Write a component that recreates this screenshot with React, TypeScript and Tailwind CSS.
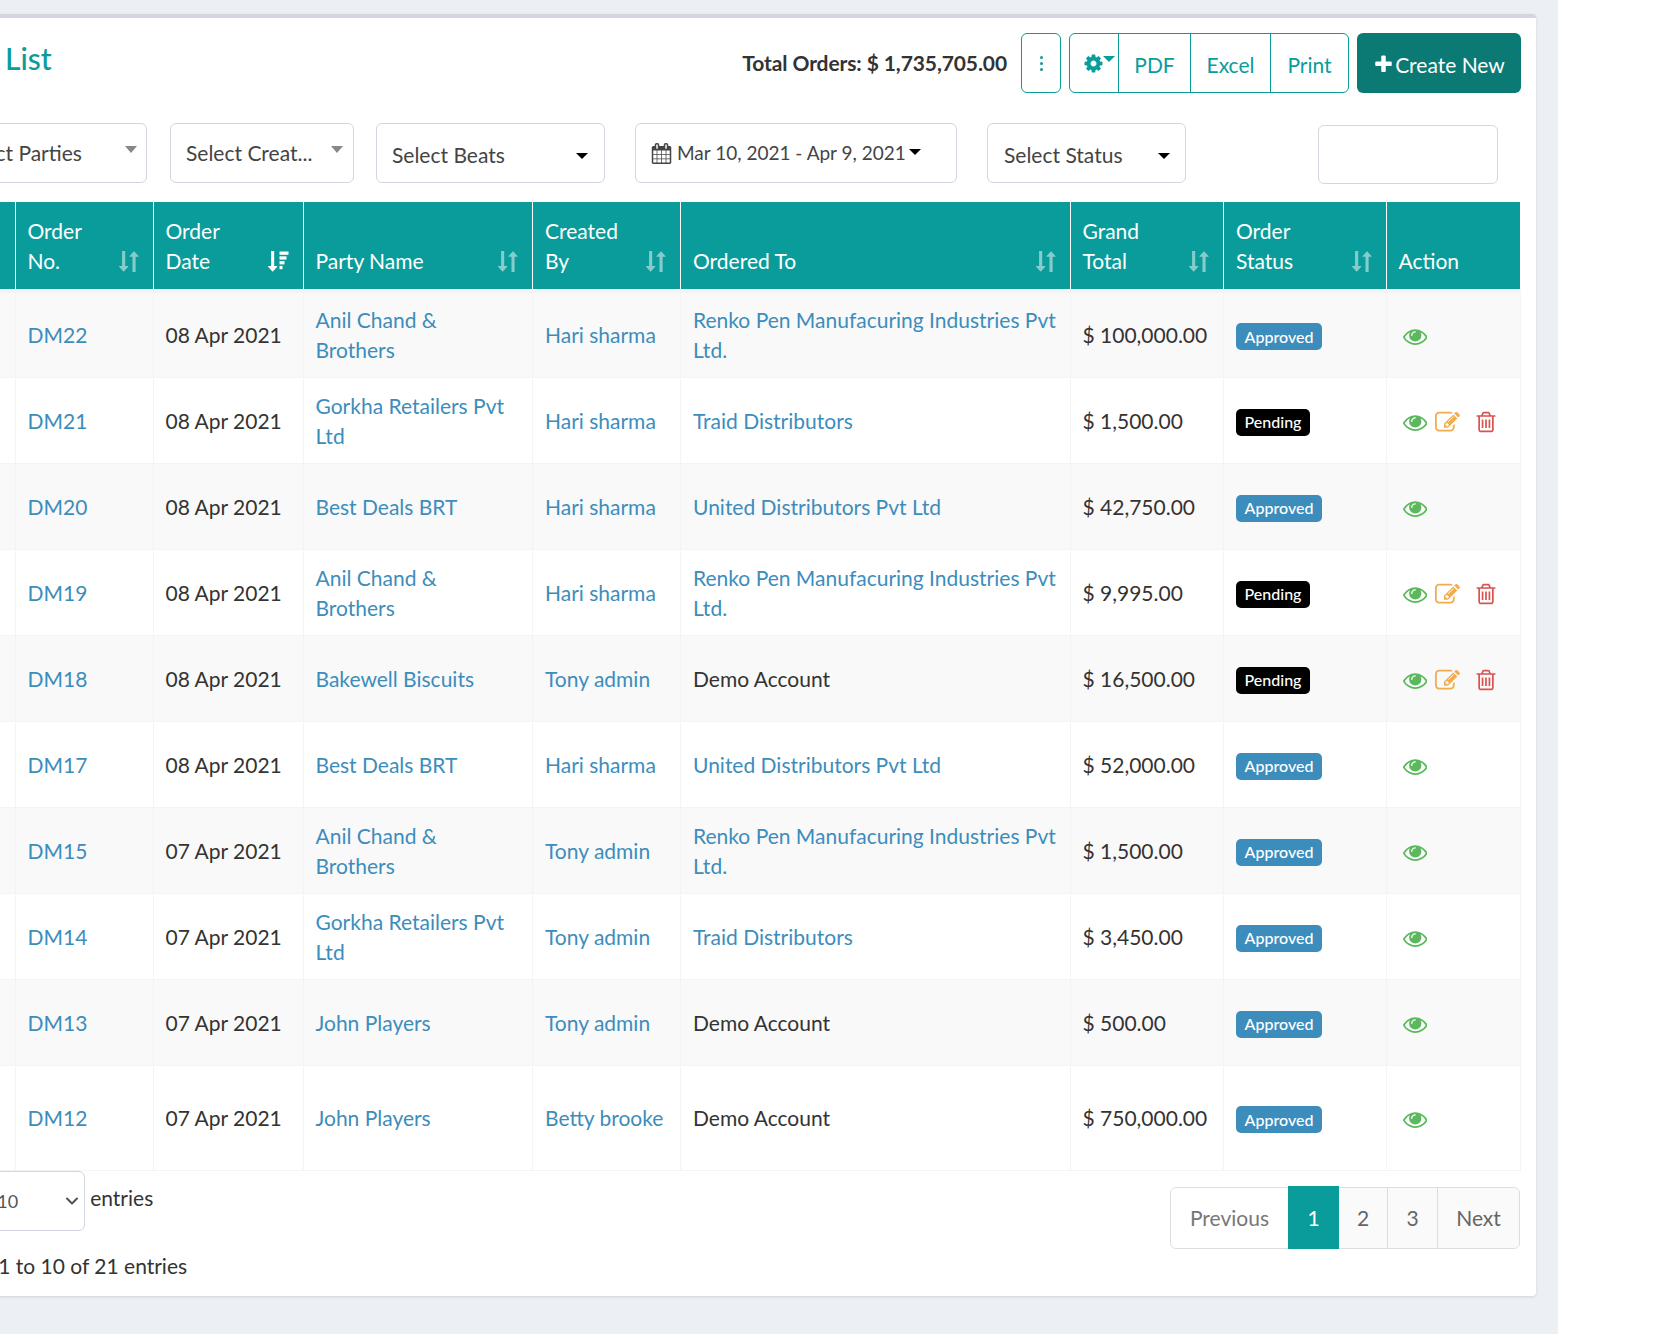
import React from "react";
import { ChevronDown } from "lucide-react";

const rows = [
  { no: "DM22", date: "08 Apr 2021", party: "Anil Chand & Brothers", by: "Hari sharma", to: "Renko Pen Manufacuring Industries Pvt Ltd.", link: true, total: "$ 100,000.00", status: "Approved" },
  { no: "DM21", date: "08 Apr 2021", party: "Gorkha Retailers Pvt Ltd", by: "Hari sharma", to: "Traid Distributors", link: true, total: "$ 1,500.00", status: "Pending" },
  { no: "DM20", date: "08 Apr 2021", party: "Best Deals BRT", by: "Hari sharma", to: "United Distributors Pvt Ltd", link: true, total: "$ 42,750.00", status: "Approved" },
  { no: "DM19", date: "08 Apr 2021", party: "Anil Chand & Brothers", by: "Hari sharma", to: "Renko Pen Manufacuring Industries Pvt Ltd.", link: true, total: "$ 9,995.00", status: "Pending" },
  { no: "DM18", date: "08 Apr 2021", party: "Bakewell Biscuits", by: "Tony admin", to: "Demo Account", link: false, total: "$ 16,500.00", status: "Pending" },
  { no: "DM17", date: "08 Apr 2021", party: "Best Deals BRT", by: "Hari sharma", to: "United Distributors Pvt Ltd", link: true, total: "$ 52,000.00", status: "Approved" },
  { no: "DM15", date: "07 Apr 2021", party: "Anil Chand & Brothers", by: "Tony admin", to: "Renko Pen Manufacuring Industries Pvt Ltd.", link: true, total: "$ 1,500.00", status: "Approved" },
  { no: "DM14", date: "07 Apr 2021", party: "Gorkha Retailers Pvt Ltd", by: "Tony admin", to: "Traid Distributors", link: true, total: "$ 3,450.00", status: "Approved" },
  { no: "DM13", date: "07 Apr 2021", party: "John Players", by: "Tony admin", to: "Demo Account", link: false, total: "$ 500.00", status: "Approved" },
  { no: "DM12", date: "07 Apr 2021", party: "John Players", by: "Betty brooke", to: "Demo Account", link: false, total: "$ 750,000.00", status: "Approved" },
];

const Eye = () => (
  <svg viewBox="0 0 1792 1792" className="w-[24.5px] h-[24.5px] fill-[#5cb85c]">
    <path d="M1664 960q-152-236-381-353 61 104 61 225 0 185-131.5 316.5t-316.5 131.5-316.5-131.5-131.5-316.5q0-121 61-225-229 117-381 353 133 205 333.5 326.5t434.5 121.5 434.5-121.5 333.5-326.5zm-720-384q0-20-14-34t-34-14q-125 0-214.5 89.5t-89.5 214.5q0 20 14 34t34 14 34-14 14-34q0-86 61-147t147-61q20 0 34-14t14-34zm848 384q0 34-20 69-140 230-376.5 368.5t-499.5 138.5-499.5-139-376.5-368q-20-35-20-69t20-69q140-229 376.5-368t499.5-139 499.5 139 376.5 368q20 35 20 69z" />
  </svg>
);

const Edit = () => (
  <svg viewBox="0 0 1792 1792" className="w-[25px] h-[25px] fill-[#f0ad4e]">
    <path d="M888 1184l116-116-152-152-116 116v56h96v96h56zm440-720q-16-16-33 1l-350 350q-17 17-1 33t33-1l350-350q17-17 1-33zm80 594v190q0 119-84.5 203.5t-203.5 84.5h-832q-119 0-203.5-84.5t-84.5-203.5v-832q0-119 84.5-203.5t203.5-84.5h832q63 0 117 25 15 7 18 23 3 17-9 29l-49 49q-14 14-32 8-23-6-45-6h-832q-66 0-113 47t-47 113v832q0 66 47 113t113 47h832q66 0 113-47t47-113v-126q0-13 9-22l64-64q15-15 35-7t20 29zm-96-738l288 288-672 672h-288v-288zm444 132l-92 92-288-288 92-92q28-28 68-28t68 28l152 152q28 28 28 68t-28 68z" />
  </svg>
);

const Trash = () => (
  <svg viewBox="0 0 1792 1792" className="w-[24px] h-[24px] fill-[#d9534f]">
    <path d="M704 736v576q0 14-9 23t-23 9h-64q-14 0-23-9t-9-23v-576q0-14 9-23t23-9h64q14 0 23 9t9 23zm256 0v576q0 14-9 23t-23 9h-64q-14 0-23-9t-9-23v-576q0-14 9-23t23-9h64q14 0 23 9t9 23zm256 0v576q0 14-9 23t-23 9h-64q-14 0-23-9t-9-23v-576q0-14 9-23t23-9h64q14 0 23 9t9 23zm128 724v-948h-896v948q0 22 7 40.500t14.500 27 10.500 8.500h832q3 0 10.500-8.500t14.500-27 7-40.500zm-672-1076h448l-48-117q-7-9-17-11h-317q-10 2-17 11zm928 32v64q0 14-9 23t-23 9h-96v948q0 83-47 143.500t-113 60.500h-832q-66 0-113-58.500t-47-141.500v-952h-96q-14 0-23-9t-9-23v-64q0-14 9-23t23-9h309l70-167q15-37 54-63t79-26h320q40 0 79 26t54 63l70 167h309q14 0 23 9t9 23z" />
  </svg>
);

const Calendar = () => (
  <svg viewBox="0 0 1792 1792" className="w-[21px] h-[21px] fill-[#444]">
    <path d="M192 1664h288v-288h-288v288zm352 0h320v-288h-320v288zm-352-352h288v-320h-288v320zm352 0h320v-320h-320v320zm-352-384h288v-288h-288v288zm736 736h320v-288h-320v288zm-384-736h320v-288h-320v288zm768 736h288v-288h-288v288zm-384-352h320v-320h-320v320zm-352-864v-288q0-13-9.500-22.500t-22.500-9.500h-64q-13 0-22.500 9.500t-9.500 22.500v288q0 13 9.500 22.500t22.500 9.500h64q13 0 22.500-9.500t9.500-22.500zm736 864h288v-320h-288v320zm-384-384h320v-288h-320v288zm384 0h288v-288h-288v288zm32-480v-288q0-13-9.500-22.500t-22.500-9.500h-64q-13 0-22.500 9.500t-9.500 22.500v288q0 13 9.500 22.500t22.500 9.500h64q13 0 22.500-9.500t9.500-22.500zm384-64v1280q0 52-38 90t-90 38h-1408q-52 0-90-38t-38-90v-1280q0-52 38-90t90-38h128v-96q0-66 47-113t113-47h64q66 0 113 47t47 113v96h384v-96q0-66 47-113t113-47h64q66 0 113 47t47 113v96h128q52 0 90 38t38 90z" />
  </svg>
);

const Cog = () => (
  <svg viewBox="0 0 1792 1792" className="w-[21px] h-[21px] fill-[#0a9c9b] shrink-0">
    <path d="M1152 896q0-106-75-181t-181-75-181 75-75 181 75 181 181 75 181-75 75-181zm512-109v222q0 12-8 23t-20 13l-185 28q-19 54-39 91 35 50 107 138 10 12 10 25t-9 23q-27 37-99 108t-94 71q-12 0-26-9l-138-108q-44 23-91 38-16 136-29 186-7 28-36 28h-222q-14 0-24.500-8.500t-11.500-21.500l-28-184q-49-16-90-37l-141 107q-10 9-25 9-14 0-25-11-126-114-165-168-7-10-7-23 0-12 8-23 15-21 51-66.500t54-70.500q-27-50-41-99l-183-27q-13-2-21-12.500t-8-23.500v-222q0-12 8-23t19-13l186-28q14-46 39-92-40-57-107-138-10-12-10-24 0-10 9-23 26-36 98.500-107.500t94.500-71.500q13 0 26 10l138 107q44-23 91-38 16-136 29-186 7-28 36-28h222q14 0 24.500 8.500t11.500 21.500l28 184q49 16 90 37l142-107q9-9 24-9 13 0 25 10 129 119 165 170 7 8 7 22 0 12-8 23-15 21-51 66.500t-54 70.500q26 50 41 98l183 28q13 2 21 12.500t8 23.500z" />
  </svg>
);

const Plus = () => (
  <svg viewBox="0 0 1792 1792" className="w-[21px] h-[21px] mr-[1px] fill-white shrink-0">
    <path d="M1600 736v192q0 40-28 68t-68 28h-416v416q0 40-28 68t-68 28h-192q-40 0-68-28t-28-68v-416h-416q-40 0-68-28t-28-68v-192q0-40 28-68t68-28h416v-416q0-40 28-68t68-28h192q40 0 68 28t28 68v416h416q40 0 68 28t28 68z" />
  </svg>
);

// datatables sort arrows, faded white
const SortBoth = () => (
  <svg viewBox="0 0 21 21" className="absolute right-[14px] bottom-[17px] w-[21px] h-[21px] fill-white opacity-50">
    <g transform="translate(-5.2 -0.4) scale(0.0121)">
      <path d="M1277 1299q8 19-5 35l-350 384q-10 10-23 10-14 0-24-10l-355-384q-13-16-5-35 9-19 29-19h224v-1248q0-14 9-23t23-9h192q14 0 23 9t9 23v1248h224q21 0 29 19z" />
    </g>
    <g transform="translate(5.200 -0.4) scale(0.0121)">
      <path d="M1277 493q-9 19-29 19h-224v1248q0 14-9 23t-23 9h-192q-14 0-23-9t-9-23v-1248h-224q-21 0-29-19t5-35l350-384q10-10 23-10 14 0 24 10l355 384q13 16 5 35z" />
    </g>
  </svg>
);

const SortDesc = () => (
  <svg viewBox="0 0 21 21" className="absolute right-[14px] bottom-[17px] w-[21px] h-[21px] fill-white">
    <g transform="translate(-6.200 -0.4) scale(0.0121)">
      <path d="M1277 1299q8 19-5 35l-350 384q-10 10-23 10-14 0-24-10l-355-384q-13-16-5-35 9-19 29-19h224v-1248q0-14 9-23t23-9h192q14 0 23 9t9 23v1248h224q21 0 29 19z" />
    </g>
    <rect x="11.500" y="0.500" width="9" height="3.300" />
    <rect x="11.500" y="5.300" width="7" height="3.300" />
    <rect x="11.500" y="10.100" width="5" height="3.300" />
    <rect x="11.500" y="14.900" width="3" height="3.300" />
  </svg>
);

const Caret = ({ gray }: { gray?: boolean }) => (
  <span
    className={
      gray
        ? "w-0 h-0 border-x-[6px] border-x-transparent border-t-[7px] border-t-[#888]"
        : "w-0 h-0 border-x-[6px] border-x-transparent border-t-[6.5px] border-t-black"
    }
  />
);

const headers = [
  { label: "", w: "w-[94.500px]" },
  { label: "Order No.", w: "w-[138px]", sort: "both", wrap: "pr-[50px]" },
  { label: "Order Date", w: "w-[150px]", sort: "desc", wrap: "pr-[60px]" },
  { label: "Party Name", w: "w-[229.500px]", sort: "both" },
  { label: "Created By", w: "w-[148px]", sort: "both", wrap: "pr-[40px]" },
  { label: "Ordered To", w: "w-[389.500px]", sort: "both" },
  { label: "Grand Total", w: "w-[153.500px]", sort: "both", wrap: "pr-[50px]" },
  { label: "Order Status", w: "w-[162.500px]", sort: "both", wrap: "pr-[60px]" },
  { label: "Action", w: "w-[134px]" },
];

const cell = "border border-[#f4f4f4] px-[12px] py-0 align-middle";
const linkCls = "text-[#3c8dbc]";

export default function App() {
  return (
    <div className="h-[1334px] w-[1656px] bg-white overflow-hidden font-['Lato',sans-serif] text-[21px] leading-[30px] text-[#333]">
      <div className="w-[1558px] h-[1334px] bg-[#ecf0f5] pt-[14px] overflow-hidden">
        <div className="-ml-[100px] w-[1636px] h-[1282px] bg-white border-t-[4px] border-[#d2d6de] rounded-[4px] shadow-[0_1px_3px_rgba(0,0,0,0.12)] pl-[20px] pr-[16px] pt-[15px]">
          {/* title and export buttons */}
          <div className="flex items-start h-[60px]">
            <h3 className="text-[30px] leading-[30px] mt-[10px] font-medium text-[#0a9c9b]">Order List</h3>
            <div className="ml-auto -mr-[1px] flex items-center">
              <span className="font-bold text-[#333] tracking-[-0.1px] mr-[14px]">Total Orders: $ 1,735,705.00</span>
              <button className="w-[40px] h-[60px] border-[1.5px] border-[#0a9c9b] rounded-[6px] text-[#0a9c9b] flex flex-col items-center justify-center gap-[3px]">
                <span className="w-[3px] h-[3px] rounded-full bg-[#0a9c9b]" />
                <span className="w-[3px] h-[3px] rounded-full bg-[#0a9c9b]" />
                <span className="w-[3px] h-[3px] rounded-full bg-[#0a9c9b]" />
              </button>
              <div className="ml-[8px] flex h-[60px] border-[1.5px] border-[#0a9c9b] rounded-[6px] text-[#0a9c9b]">
                <button className="w-[49px] flex items-center justify-start pl-[13px] border-r-[1.5px] border-[#0a9c9b]">
                  <Cog />
                  <span className="w-0 h-0 -ml-[1px] -mt-[9px] border-x-[6px] border-x-transparent border-t-[6.500px] border-t-[#0a9c9b]" />
                </button>
                <button className="w-[72px] border-r-[1.5px] border-[#0a9c9b] pt-[3px]">PDF</button>
                <button className="w-[80px] border-r-[1.5px] border-[#0a9c9b] pt-[3px]">Excel</button>
                <button className="w-[77px] pt-[3px]">Print</button>
              </div>
              <button className="ml-[8px] w-[164px] h-[60px] bg-[#0b7a75] rounded-[6px] text-white flex items-center justify-center pt-[3px]">
                <Plus />
                Create New
              </button>
            </div>
          </div>

          {/* filters */}
          <div className="flex items-start mt-[30px]">
            <div className="w-[227px] h-[60px] border-[1.5px] border-[#d2d6de] rounded-[6px] relative flex items-center pl-[36px] pb-[1px] text-[#444]">
              Select Parties
              <span className="absolute right-[9px] top-[22px] flex"><Caret gray /></span>
            </div>
            <div className="ml-[23px] w-[184px] h-[60px] border-[1.5px] border-[#d2d6de] rounded-[6px] relative flex items-center pl-[15px] pb-[1px] text-[#444]">
              Select Creat...
              <span className="absolute right-[10px] top-[22px] flex"><Caret gray /></span>
            </div>
            <div className="ml-[22px] w-[229px] h-[60px] border-[1.5px] border-[#d2d6de] rounded-[6px] flex items-center justify-between pl-[15px] pr-[16px] pt-[3px] text-[#444]">
              Select Beats
              <span className="mt-[3px] flex"><Caret /></span>
            </div>
            <div className="ml-[30px] w-[322px] h-[60px] border-[1.5px] border-[#d2d6de] rounded-[6px] flex items-center pl-[15px] text-[#444] text-[19px]">
              <Calendar />
              <span className="ml-[5px]">Mar 10, 2021 - Apr 9, 2021</span>
              <span className="ml-[3px] -mt-[3px] flex"><Caret /></span>
            </div>
            <div className="ml-[30px] w-[199px] h-[60px] border-[1.5px] border-[#d2d6de] rounded-[6px] flex items-center justify-between pl-[16px] pr-[15px] pt-[3px] text-[#444]">
              Select Status
              <span className="mt-[3px] flex"><Caret /></span>
            </div>
            <input className="ml-[132px] mt-[2px] w-[180px] h-[59px] border-[1.5px] border-[#d2d6de] rounded-[6px] outline-none" />
          </div>

          {/* orders table */}
          <table className="mt-[18px] w-[1599px] table-fixed border-collapse">
            <colgroup>
              {headers.map((h, i) => (
                <col key={i} className={h.w} />
              ))}
            </colgroup>
            <thead>
              <tr className="h-[89px] bg-[#0a9c9b] text-white border-b-[4px] border-[#f4f4f4]">
                {headers.map((h, i) => (
                  <th
                    key={i}
                    className={
                      i === 8
                        ? "relative border-r-0 px-[12px] pb-[13px] align-bottom text-left font-normal"
                        : "relative border-r-[1.5px] border-white px-[12px] pb-[13px] align-bottom text-left font-normal"
                    }
                  >
                    <div className={h.wrap}>{h.label}</div>
                    {h.sort === "both" && <SortBoth />}
                    {h.sort === "desc" && <SortDesc />}
                  </th>
                ))}
              </tr>
            </thead>
            <tbody>
              {rows.map((r, i) => (
                <tr
                  key={r.no}
                  className={
                    (i % 2 === 0 ? "bg-[#f9f9f9] " : "bg-white ") +
                    (i === 0 ? "h-[86.500px]" : i === 9 ? "h-[104.500px]" : "h-[86px]")
                  }
                >
                  <td className={cell}></td>
                  <td className={cell + " " + linkCls}>{r.no}</td>
                  <td className={cell}>{r.date}</td>
                  <td className={cell + " " + linkCls}>{r.party}</td>
                  <td className={cell + " " + linkCls}>{r.by}</td>
                  <td className={cell + (r.link ? " " + linkCls : "")}>{r.to}</td>
                  <td className={cell}>{r.total}</td>
                  <td className={cell}>
                    <span
                      className={
                        r.status === "Approved"
                          ? "inline-flex items-center h-[27px] w-[86px] justify-center rounded-[5px] bg-[#3c8dbc] text-white text-[16px] font-medium leading-none mt-[3px]"
                          : "inline-flex items-center h-[27px] w-[74px] justify-center rounded-[5px] bg-black text-white text-[16px] font-medium leading-none mt-[3px]"
                      }
                    >
                      {r.status}
                    </span>
                  </td>
                  <td className={cell}>
                    <div className="flex items-center pl-[4px] mt-[3px]">
                      <Eye />
                      {r.status === "Pending" && (
                        <>
                          <span className="ml-[8px]">
                            <Edit />
                          </span>
                          <span className="ml-[14px]">
                            <Trash />
                          </span>
                        </>
                      )}
                    </div>
                  </td>
                </tr>
              ))}
            </tbody>
          </table>

          {/* footer */}
          <div className="flex justify-between">
            <div>
              <div className="flex items-start pl-[6px]">
                <span>Show</span>
                <div className="ml-[8px] w-[100px] h-[60px] border-[1.5px] border-[#d2d6de] rounded-[6px] flex items-center justify-between pl-[11px] pr-[2px] pt-[1px] text-[18px] text-[#555]">
                  10
                  <ChevronDown className="w-[20px] h-[20px] text-[#555]" strokeWidth={2.5} />
                </div>
                <span className="ml-[5px] mt-[12px]">entries</span>
              </div>
              <div className="mt-[20px] -ml-[6px]">Showing 1 to 10 of 21 entries</div>
            </div>
            <div className="mt-[16px] flex h-[62px] rounded-[6px] border-[1.5px] border-[#ddd] text-[#666]">
              <span className="w-[117px] flex items-center justify-center bg-white rounded-l-[6px] text-[#777]">Previous</span>
              <span className="-my-[1.500px] w-[51px] flex items-center justify-center bg-[#0a9c9b] text-white">1</span>
              <span className="w-[49px] flex items-center justify-center bg-[#fafafa] border-r-[1.5px] border-[#ddd]">2</span>
              <span className="w-[50px] flex items-center justify-center bg-[#fafafa] border-r-[1.5px] border-[#ddd]">3</span>
              <span className="w-[81px] flex items-center justify-center bg-[#fafafa] rounded-r-[6px]">Next</span>
            </div>
          </div>
        </div>
      </div>
    </div>
  );
}
